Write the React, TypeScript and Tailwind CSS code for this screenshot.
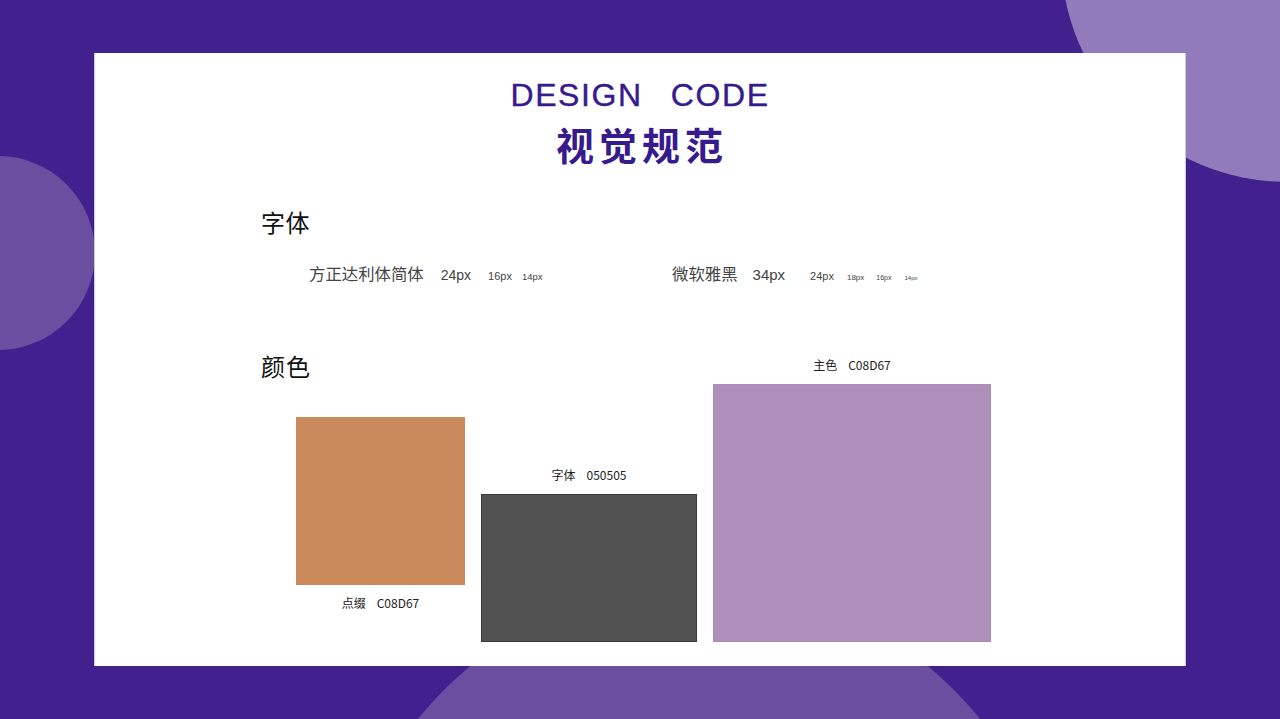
const latin = "font-['Liberation_Sans','Noto_Sans_CJK_SC',sans-serif]";
const cjk = "font-['Noto_Sans_CJK_SC','Liberation_Sans',sans-serif]";

function Swatch({ label, code, className, below }: { label: string; code: string; className: string; below?: boolean }) {
  const text = (
    <div className={`${cjk} flex justify-center gap-[11px] text-[12px] leading-[18px] text-[#222]`}>
      <span>{label}</span>
      <span>{code}</span>
    </div>
  );
  return (
    <div className="flex flex-col">
      {!below && <div className="mb-[10px]">{text}</div>}
      <div className={className} />
      {below && <div className="mt-[9px] mb-[30px]">{text}</div>}
    </div>
  );
}

export default function App() {
  return (
    <div className="relative h-[719px] w-[1280px] overflow-hidden bg-[#42208e] pt-[53px] pl-[94px]">
      <div className="absolute left-[-99px] top-[156px] h-[194px] w-[194px] rounded-full bg-[#6a4fa0]" />
      <div className="absolute left-[1061px] top-[-272px] h-[454px] w-[454px] rounded-full bg-[#917bbb]" />
      <div className="absolute left-[339px] top-[584px] h-[720px] w-[720px] rounded-full bg-[#6a4fa0]" />
      <div className="relative flex h-[613px] w-[1092px] flex-col border-x border-[#cfc6e6] bg-white">
        <div className={`${latin} mt-[22px] flex justify-center gap-[28px] text-[32px] leading-[40px] tracking-[1.6px] text-[#371a8c] [-webkit-text-stroke:0.4px_#371a8c]`}>
          <span>DESIGN</span>
          <span>CODE</span>
        </div>
        <div className={`${cjk} mt-[5px] pl-[4px] text-center text-[38px] leading-[48px] font-bold tracking-[5px] text-[#371a8c]`}>
          视觉规范
        </div>
        <div className={`${cjk} mt-[36px] ml-[166px] text-[24px] leading-[36px] tracking-[0.5px] text-[#111]`}>字体</div>
        <div className={`${cjk} mt-[21px] flex items-center text-[#444]`}>
          <div className="ml-[214px] flex w-[363px] items-baseline">
            <span className="text-[16.4px] leading-[24px]">方正达利体简体</span>
            <span className={`${latin} ml-[17px] text-[14px]`}>24px</span>
            <span className={`${latin} ml-[17px] text-[11px]`}>16px</span>
            <span className={`${latin} ml-[10px] text-[9.5px]`}>14px</span>
          </div>
          <div className="flex items-baseline">
            <span className="text-[16.4px] leading-[24px]">微软雅黑</span>
            <span className={`${latin} ml-[15px] text-[15px]`}>34px</span>
            <span className={`${latin} ml-[25px] text-[11px]`}>24px</span>
            <span className={`${latin} ml-[13px] text-[8px]`}>18px</span>
            <span className={`${latin} ml-[12px] text-[7px]`}>16px</span>
            <span className={`${latin} ml-[13px] text-[6px]`}>14px</span>
          </div>
        </div>
        <div className={`${cjk} mt-[61px] ml-[166px] text-[24px] leading-[36px] tracking-[1px] text-[#111]`}>颜色</div>
        <div className="mt-[-28px] ml-[201px] flex items-end gap-[16px]">
          <Swatch below label="点缀" code="C08D67" className="h-[168px] w-[169px] bg-[#ca8a5b]" />
          <Swatch label="字体" code="050505" className="h-[148px] w-[216px] border border-[#3a3a3a] bg-[#525252]" />
          <Swatch label="主色" code="C08D67" className="h-[258px] w-[278px] border border-[#a98ab8] bg-[#ae90bb]" />
        </div>
      </div>
    </div>
  );
}
